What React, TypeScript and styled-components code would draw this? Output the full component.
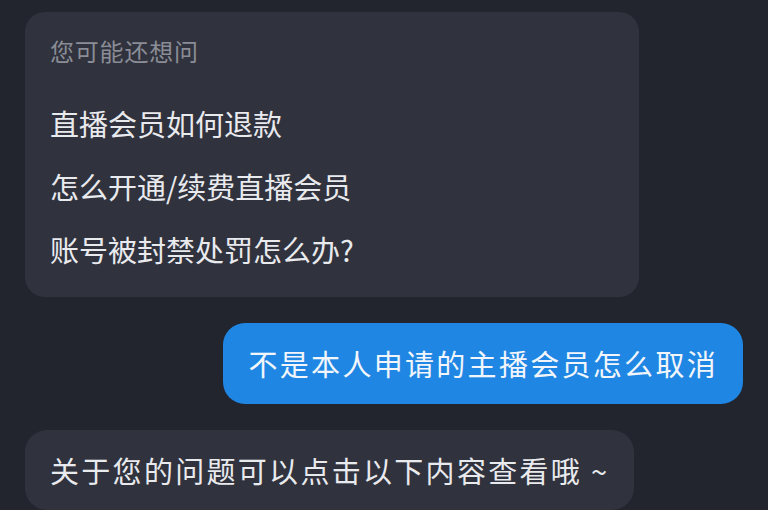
import styled, { createGlobalStyle } from 'styled-components';

const GlobalStyle = createGlobalStyle`
  html, body {
    margin: 0;
    padding: 0;
    background: #22242e;
    overflow: hidden;
  }
  * { box-sizing: border-box; }
`;

const Page = styled.div`
  width: 768px;
  height: 510px;
  overflow: hidden;
  background: #22242e;
  padding: 12px 25px 0 25px;
  display: flex;
  flex-direction: column;
  gap: 26px;
  font-family: "Noto Sans CJK SC", "Noto Sans", sans-serif;
`;

const SuggestCard = styled.div`
  width: 614px;
  background: #30323d;
  border-radius: 20px;
  padding: 24px 25px 16px 25px;
  display: flex;
  flex-direction: column;
`;

const CardTitle = styled.div`
  font-size: 24px;
  line-height: 30px;
  letter-spacing: 0.8px;
  color: #8a8d96;
  margin-bottom: 26px;
`;

const SuggestItem = styled.div`
  font-size: 29px;
  line-height: 63px;
  color: #e9eaee;
`;

const Bubble = styled.div<{ $mine?: boolean }>`
  align-self: ${({ $mine }) => ($mine ? 'flex-end' : 'flex-start')};
  height: 82px;
  display: flex;
  align-items: center;
  padding: 0 25px 0 25px;
  border-radius: 22px;
  font-size: 29px;
  letter-spacing: 2.3px;
  color: ${({ $mine }) => ($mine ? '#f2f6fb' : '#e9eaee')};
  background: ${({ $mine }) => ($mine ? '#1f87e3' : '#30323d')};
  white-space: nowrap;
`;

const suggestions = ['直播会员如何退款', '怎么开通/续费直播会员', '账号被封禁处罚怎么办?'];

export default function App() {
  return (
    <>
      <GlobalStyle />
      <Page>
        <SuggestCard>
          <CardTitle>您可能还想问</CardTitle>
          {suggestions.map((s) => (
            <SuggestItem key={s}>{s}</SuggestItem>
          ))}
        </SuggestCard>
        <Bubble $mine>不是本人申请的主播会员怎么取消</Bubble>
        <Bubble>关于您的问题可以点击以下内容查看哦 ~</Bubble>
      </Page>
    </>
  );
}
